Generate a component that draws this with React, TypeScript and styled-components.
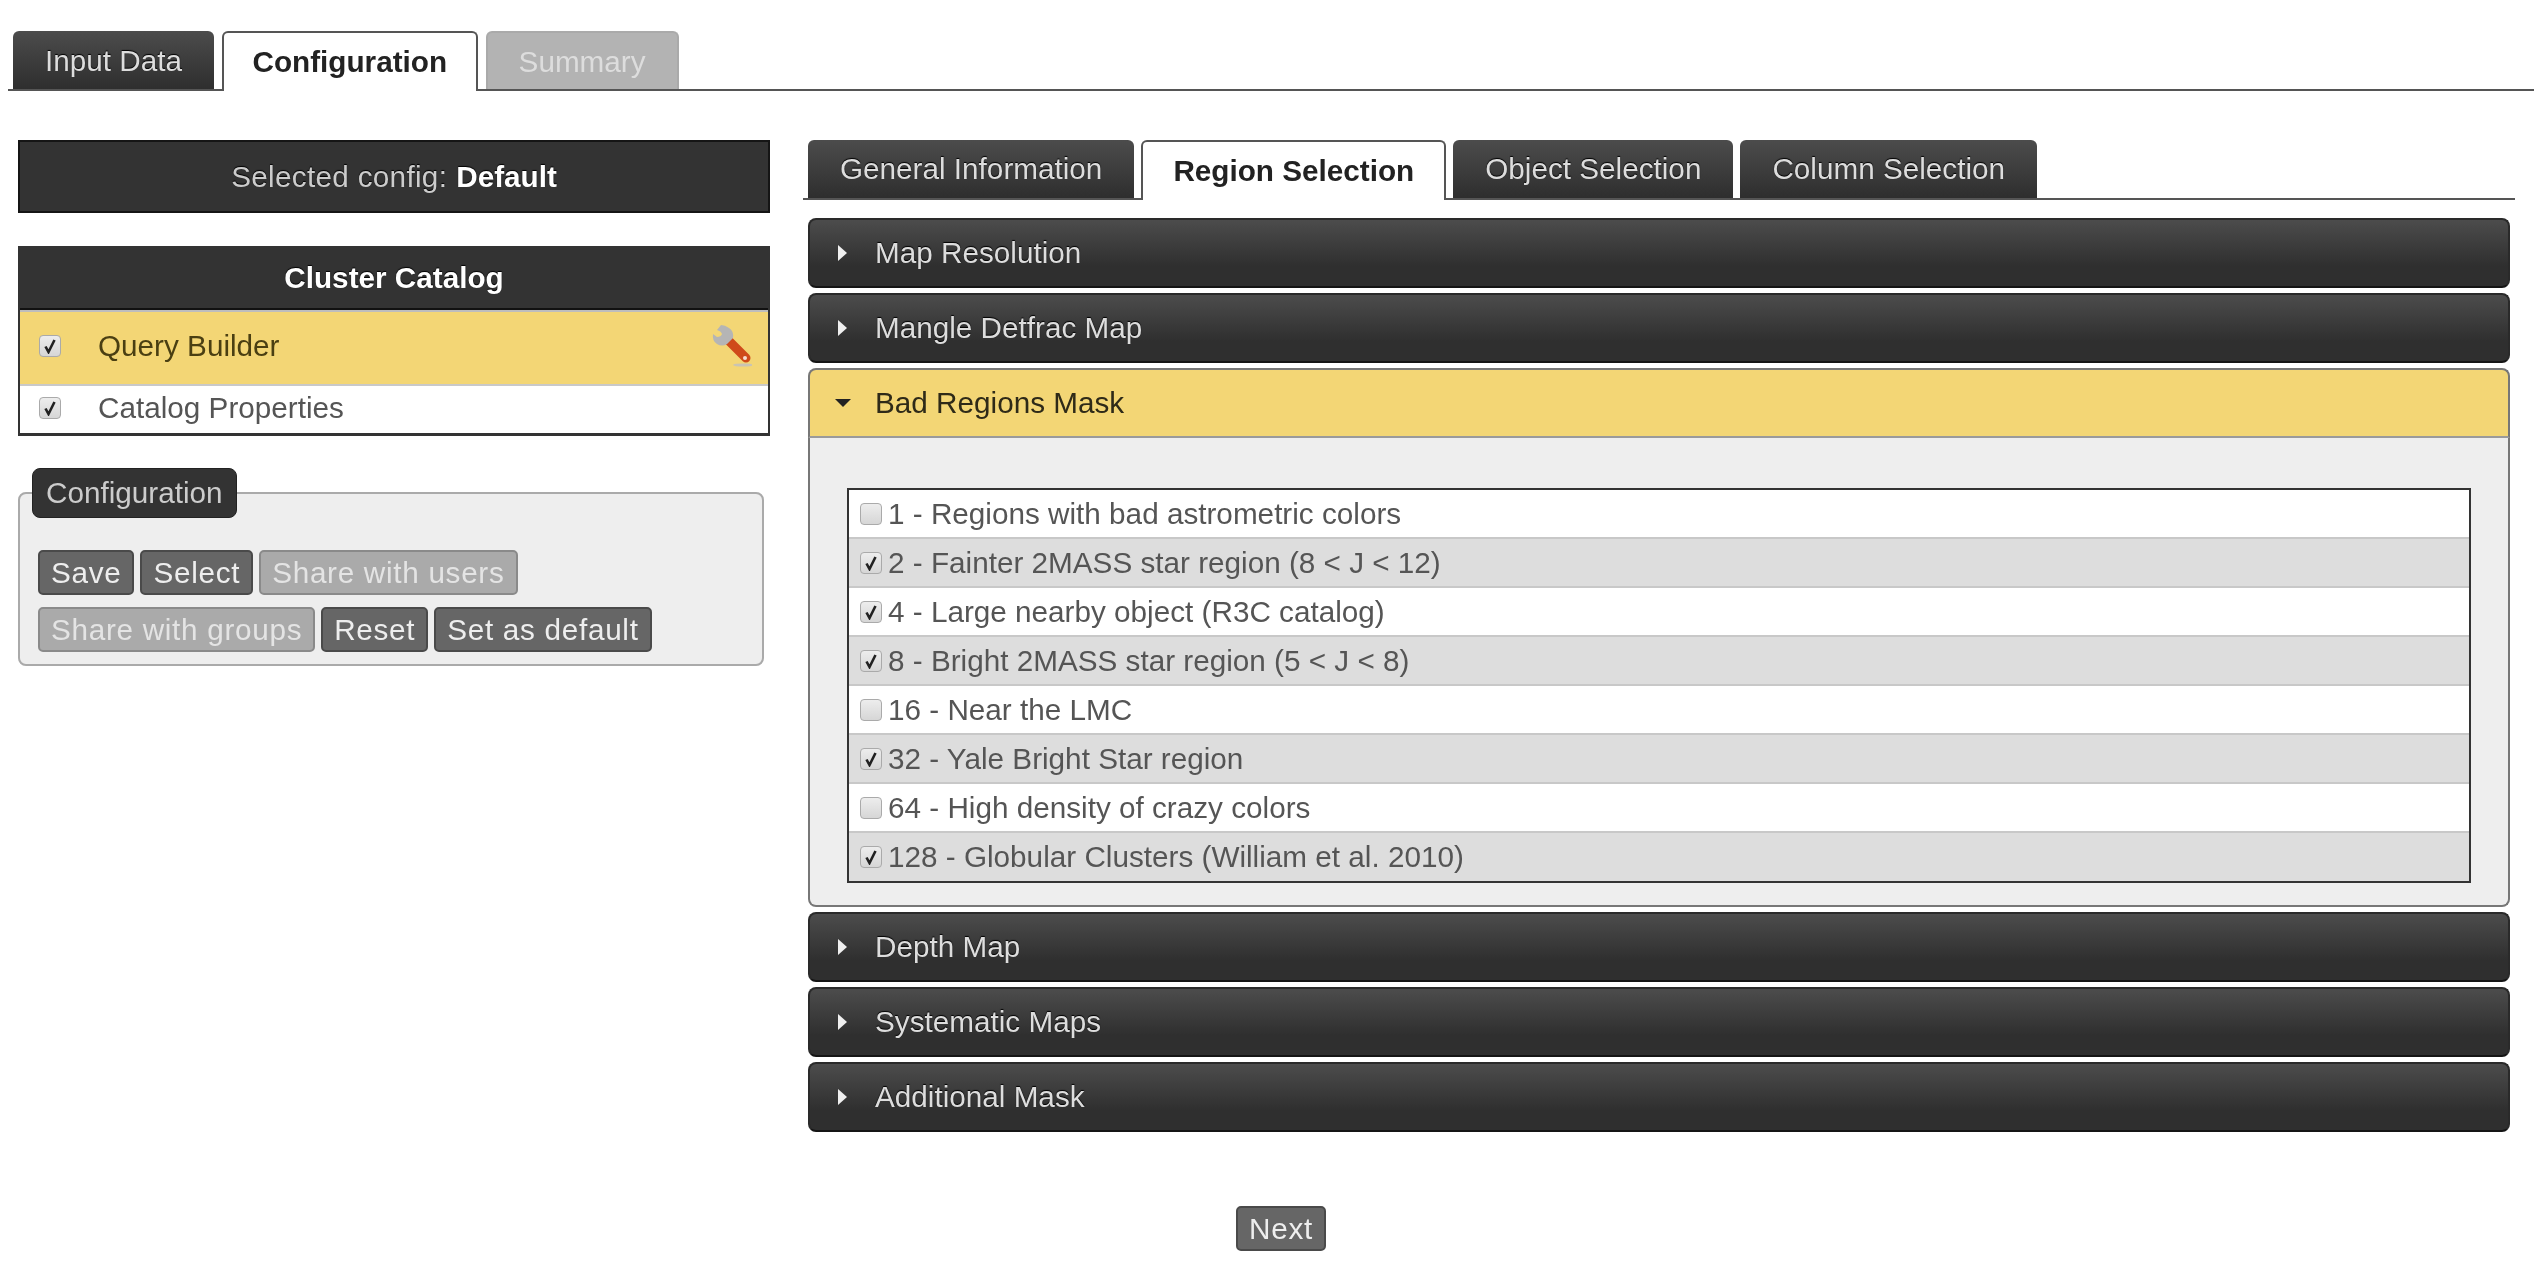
import React from 'react';
import styled, { createGlobalStyle } from 'styled-components';

const GlobalStyle = createGlobalStyle`
  html, body {
    margin: 0;
    padding: 0;
    background: #fff;
  }
  body {
    font-family: "Liberation Sans", Arial, sans-serif;
    color: #333;
  }
`;

const regions = [
  { label: '1 - Regions with bad astrometric colors', checked: false },
  { label: '2 - Fainter 2MASS star region (8 < J < 12)', checked: true },
  { label: '4 - Large nearby object (R3C catalog)', checked: true },
  { label: '8 - Bright 2MASS star region (5 < J < 8)', checked: true },
  { label: '16 - Near the LMC', checked: false },
  { label: '32 - Yale Bright Star region', checked: true },
  { label: '64 - High density of crazy colors', checked: false },
  { label: '128 - Globular Clusters (William et al. 2010)', checked: true },
];

const Check: React.FC<{ checked?: boolean }> = ({ checked }) => (
  <CheckBox>
    {checked && (
      <svg width="14" height="16" viewBox="0 0 14 16">
        <path d="M2.5 8.5 L5.5 14 L11.5 2" fill="none" stroke="#222" strokeWidth="2.6" />
      </svg>
    )}
  </CheckBox>
);

const Wrench = () => (
  <WrenchIcon width="40" height="44" viewBox="0 0 40 44">
    <ellipse cx="31" cy="41" rx="10" ry="1.6" fill="#c9c4b4" />
    <path d="M16 16 L34 34" stroke="#cf4a1a" strokeWidth="9" strokeLinecap="round" />
    <path
      d="M9 1 L5 6 Q9 7 10 10 Q9 13 5 13 L1 10 Q0 17 5 20 Q10 23 15 20 L21 14 Q22 7 17 4 Q13 1 9 1 Z"
      fill="#b5b5b5"
    />
    <circle cx="33" cy="34" r="2" fill="#f6dcd0" />
  </WrenchIcon>
);

export default function App() {
  return (
    <>
      <GlobalStyle />
      <Page>
        <TopTabs>
          <Tab>Input Data</Tab>
          <Tab $active>Configuration</Tab>
          <Tab $disabled>Summary</Tab>
        </TopTabs>

        <Columns>
          <LeftColumn>
            <SelectedConfig>
              Selected config: <strong>Default</strong>
            </SelectedConfig>

            <Catalog>
              <CatalogHeader>Cluster Catalog</CatalogHeader>
              <CatalogRow $selected>
                <Check checked />
                <CatalogLabel>Query Builder</CatalogLabel>
                <Wrench />
              </CatalogRow>
              <CatalogRow>
                <Check checked />
                <CatalogLabel>Catalog Properties</CatalogLabel>
              </CatalogRow>
            </Catalog>

            <ConfigBox>
              <ConfigLegend>Configuration</ConfigLegend>
              <ButtonRow>
                <ActionButton>Save</ActionButton>
                <ActionButton>Select</ActionButton>
                <ActionButton $muted>Share with users</ActionButton>
              </ButtonRow>
              <ButtonRow>
                <ActionButton $muted>Share with groups</ActionButton>
                <ActionButton>Reset</ActionButton>
                <ActionButton>Set as default</ActionButton>
              </ButtonRow>
            </ConfigBox>
          </LeftColumn>

          <RightColumn>
            <SubTabs>
              <SubTab>General Information</SubTab>
              <SubTab $active>Region Selection</SubTab>
              <SubTab>Object Selection</SubTab>
              <SubTab>Column Selection</SubTab>
            </SubTabs>

            <Accordion>
              <AccordionHead>
                <Caret />
                Map Resolution
              </AccordionHead>
              <AccordionHead>
                <Caret />
                Mangle Detfrac Map
              </AccordionHead>
              <div>
                <AccordionHead $open>
                  <Caret $open />
                  Bad Regions Mask
                </AccordionHead>
                <AccordionPanel>
                  <RegionList>
                    {regions.map(r => (
                      <RegionRow key={r.label}>
                        <Check checked={r.checked} />
                        {r.label}
                      </RegionRow>
                    ))}
                  </RegionList>
                </AccordionPanel>
              </div>
              <AccordionHead>
                <Caret />
                Depth Map
              </AccordionHead>
              <AccordionHead>
                <Caret />
                Systematic Maps
              </AccordionHead>
              <AccordionHead>
                <Caret />
                Additional Mask
              </AccordionHead>
            </Accordion>
          </RightColumn>
        </Columns>

        <Footer>
          <ActionButton>Next</ActionButton>
        </Footer>
      </Page>
    </>
  );
}

const Page = styled.div`
  width: 2534px;
  height: 1270px;
  overflow: hidden;
  padding-top: 31px;
  box-sizing: border-box;
  filter: blur(0.6px);
`;

const TopTabs = styled.div`
  display: flex;
  gap: 7.5px;
  height: 58px;
  margin-left: 8px;
  padding-left: 5px;
  border-bottom: 2px solid #555;
`;

const Tab = styled.div<{ $active?: boolean; $disabled?: boolean }>`
  box-sizing: border-box;
  height: ${p => (p.$active ? '60px' : '58px')};
  display: flex;
  align-items: center;
  font-size: 29.7px;
  border-radius: 6px 6px 0 0;
  ${p =>
    p.$active
      ? `
    background: #fff;
    color: #222;
    font-weight: bold;
    border: 2px solid #555;
    border-bottom: none;
    padding: 0 29px;
  `
      : p.$disabled
        ? `
    background: #b3b3b3;
    color: #ddd;
    border: 2px solid #aaa;
    border-bottom: none;
    padding: 2px 31px 0;
  `
        : `
    background: linear-gradient(#4c4c4c, #2e2e2e);
    color: #ddd;
    padding: 2px 32px 0;
    text-shadow: 0 -1px 1px #000;
  `}
`;

const Columns = styled.div`
  display: grid;
  grid-template-columns: 752px 1712px;
  column-gap: 33px;
  padding: 49px 0 0 18px;
`;

const LeftColumn = styled.div`
  display: flex;
  flex-direction: column;
`;

const RightColumn = styled.div`
  display: flex;
  flex-direction: column;
`;

const SelectedConfig = styled.div`
  box-sizing: border-box;
  height: 73px;
  display: flex;
  align-items: center;
  justify-content: center;
  gap: 9px;
  background: #333;
  border: 2px solid #151515;
  color: #ccc;
  font-size: 29.7px;
  letter-spacing: 0.3px;
  text-shadow: 0 -1px 1px #000;

  strong {
    color: #fff;
    letter-spacing: 0;
  }
`;

const Catalog = styled.div`
  margin-top: 33px;
  border: 2px solid #333;
  border-bottom-width: 3px;
`;

const CatalogHeader = styled.div`
  height: 60px;
  display: flex;
  align-items: center;
  justify-content: center;
  background: #333;
  border-bottom: 2px solid #111;
  color: #fff;
  font-weight: bold;
  font-size: 29.7px;
  text-shadow: 0 -1px 1px #000;
`;

const CatalogRow = styled.div<{ $selected?: boolean }>`
  box-sizing: border-box;
  height: ${p => (p.$selected ? '76px' : '47px')};
  display: flex;
  align-items: center;
  padding: 0 16px 4px 19px;
  background: ${p => (p.$selected ? '#f3d675' : '#fff')};
  border-top: ${p => (p.$selected ? '2px solid #bdbdbd' : 'none')};
  border-bottom: ${p => (p.$selected ? '2px solid #c9c9c9' : 'none')};
  color: ${p => (p.$selected ? '#4a3f12' : '#555')};
`;

const CatalogLabel = styled.span`
  margin-left: 37px;
  font-size: 29.7px;
`;

const WrenchIcon = styled.svg`
  margin-left: auto;
`;

const CheckBox = styled.span`
  box-sizing: border-box;
  flex: none;
  width: 22px;
  height: 22px;
  display: inline-flex;
  align-items: center;
  justify-content: center;
  border-radius: 4px;
  border: 1px solid #aaa;
  background: linear-gradient(#ededed, #d6d6d6);
`;

const ConfigBox = styled.fieldset`
  box-sizing: border-box;
  width: 746px;
  height: 198px;
  margin: 32px 0 0;
  padding: 0 0 0 18px;
  background: #eee;
  border: 2px solid #aaa;
  border-radius: 8px;
`;

const ConfigLegend = styled.legend`
  box-sizing: border-box;
  height: 50px;
  padding: 0 13px;
  margin-left: -6px;
  display: flex;
  align-items: center;
  background: #333;
  border: 1px solid #222;
  border-radius: 8px;
  color: #ccc;
  font-size: 29.7px;
`;

const ButtonRow = styled.div`
  display: flex;
  gap: 6px;
  margin-top: 12px;

  &:first-of-type {
    margin-top: 32px;
  }
`;

const ActionButton = styled.button<{ $muted?: boolean }>`
  box-sizing: border-box;
  height: 45px;
  padding: 0 11px;
  font-family: inherit;
  font-size: 29.7px;
  letter-spacing: 0.7px;
  border-radius: 5px;
  border: 2px solid ${p => (p.$muted ? '#8a8a8a' : '#4a4a4a')};
  background: ${p => (p.$muted ? '#aaa' : '#666')};
  color: ${p => (p.$muted ? '#e4e4e4' : '#eee')};
`;

const SubTabs = styled.div`
  display: flex;
  gap: 7px;
  height: 58px;
  padding-left: 5px;
  border-bottom: 2px solid #555;
`;

const SubTab = styled.div<{ $active?: boolean }>`
  box-sizing: border-box;
  height: ${p => (p.$active ? '60px' : '58px')};
  display: flex;
  align-items: center;
  padding: 0 ${p => (p.$active ? '30px' : '32px')};
  font-size: 29.7px;
  border-radius: 6px 6px 0 0;
  ${p =>
    p.$active
      ? `
    background: #fff;
    color: #222;
    font-weight: bold;
    border: 2px solid #555;
    border-bottom: none;
  `
      : `
    background: linear-gradient(#4c4c4c, #2e2e2e);
    color: #ddd;
    text-shadow: 0 -1px 1px #000;
  `}
`;

const Accordion = styled.div`
  display: flex;
  flex-direction: column;
  gap: 5px;
  margin: 18px 5px 0;
`;

const AccordionHead = styled.div<{ $open?: boolean }>`
  box-sizing: border-box;
  height: 70px;
  display: flex;
  align-items: center;
  padding-left: 28px;
  font-size: 29.7px;
  ${p =>
    p.$open
      ? `
    background: #f3d675;
    color: #2e2a18;
    border: 2px solid #777;
    border-bottom-color: #9a9a9a;
    border-radius: 8px 8px 0 0;
  `
      : `
    background: linear-gradient(#4c4c4c, #2f2f2f 70%, #2f2f2f);
    color: #ddd;
    border: 2px solid #2a2a2a;
    border-bottom-color: #151515;
    border-radius: 8px;
    text-shadow: 0 -1px 1px #000;
  `}
`;

const Caret = styled.span<{ $open?: boolean }>`
  flex: none;
  width: 0;
  height: 0;
  ${p =>
    p.$open
      ? `
    margin: 0 24px 0 -3px;
    border-left: 8px solid transparent;
    border-right: 8px solid transparent;
    border-top: 8px solid #222;
  `
      : `
    margin: 0 28px 0 0;
    border-top: 8px solid transparent;
    border-bottom: 8px solid transparent;
    border-left: 9px solid #f0f0f0;
  `}
`;

const AccordionPanel = styled.div`
  box-sizing: border-box;
  height: 469px;
  padding: 50px 37px 0;
  background: #eee;
  border: 2px solid #777;
  border-top: none;
  border-radius: 0 0 8px 8px;
`;

const RegionList = styled.div`
  border: 2px solid #333;
`;

const RegionRow = styled.div`
  box-sizing: border-box;
  height: 49px;
  display: flex;
  align-items: center;
  gap: 6px;
  padding-left: 11px;
  background: #fff;
  color: #555;
  font-size: 29.7px;
  border-bottom: 2px solid #c8c8c8;

  &:nth-child(even) {
    background: #ddd;
  }
  &:last-child {
    height: 48px;
    border-bottom: none;
  }
`;

const Footer = styled.div`
  display: flex;
  justify-content: center;
  margin-top: 74px;
  padding-left: 28px;
`;
